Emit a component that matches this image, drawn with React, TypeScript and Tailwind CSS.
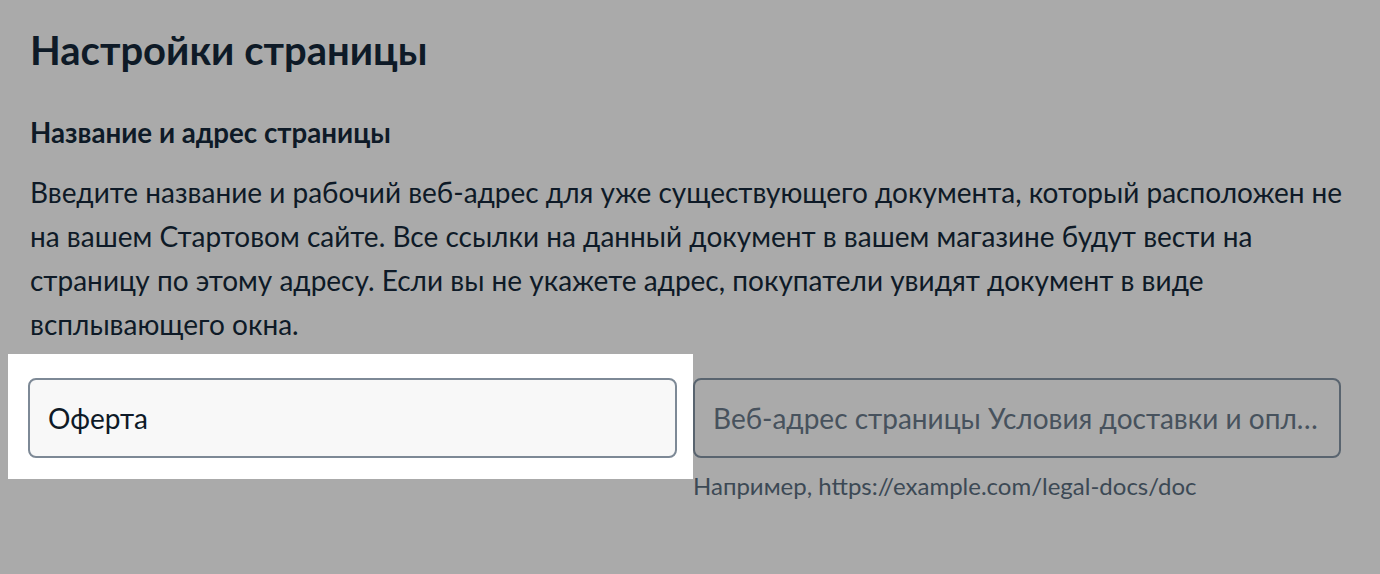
export default function App() {
  return (
    <div className="min-h-[574px] w-[1380px] bg-[#aaaaaa] font-['Lato',sans-serif] text-[#0e1a27]">
      <div className="pt-[26px]">
        <h1 className="pl-[30px] text-[40px] font-bold leading-[48px]">Настройки страницы</h1>
        <h2 className="mt-[42px] pl-[30px] text-[27.7px] font-bold leading-[34px]">Название и адрес страницы</h2>
        <p className="mt-[20px] pl-[30px] pr-[30px] text-[28px] leading-[44px]">
          Введите название и рабочий веб-адрес для уже существующего документа, который расположен не на вашем
          Стартовом сайте. Все ссылки на данный документ в вашем магазине будут вести на страницу по этому адресу.
          Если вы не укажете адрес, покупатели увидят документ в виде всплывающего окна.
        </p>
        <div className="mt-[8px] flex items-start pl-[8px]">
          <div className="bg-white pb-[21px] pl-[20px] pr-[16px] pt-[24px]">
            <div className="flex h-[80px] w-[649px] items-center rounded-[8px] border-2 border-[#7d8996] bg-[#f8f8f8] px-[18px] text-[28px] text-[#0e1a27]">
              Оферта
            </div>
          </div>
          <div className="pt-[24px]">
            <div className="flex h-[80px] w-[648px] items-center rounded-[8px] border-2 border-[#59646f] px-[18px] text-[28px] text-[#47525d]">
              <span className="whitespace-nowrap">Веб-адрес страницы Условия доставки и опл…</span>
            </div>
            <div className="mt-[14px] text-[24px] leading-[28px] text-[#3c4955]">
              Например, https://example.com/legal-docs/doc
            </div>
          </div>
        </div>
      </div>
    </div>
  );
}
